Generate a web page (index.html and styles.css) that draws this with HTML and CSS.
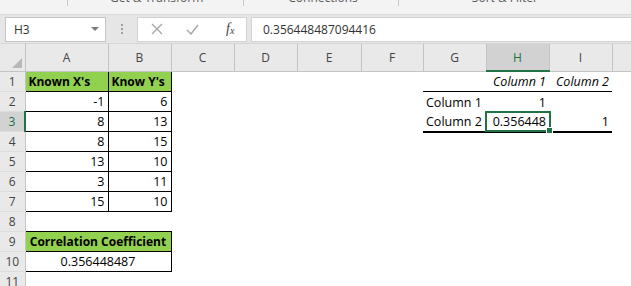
FILE: index.html
```html
<!DOCTYPE html>
<html>
  <head>
    <meta charset="UTF-8" />
    <title>Correlation - Excel</title>
    <link rel="stylesheet" href="styles.css">
  </head>

  <body>
    <div class="ribbon">
      <div class="ribbon-labels">
        <span class="sep s1"></span>
        <span class="grp g1">Get &amp; Transform</span>
        <span class="sep s2"></span>
        <span class="grp g2">Connections</span>
        <span class="sep s3"></span>
        <span class="grp g3">Sort &amp; Filter</span>
      </div>
    </div>

    <div class="fbar">
      <div class="namebox">
        <span>H3</span>
        <span class="caret"></span>
      </div>
      <div class="grip"><i></i><i></i><i></i></div>
      <div class="fbtns">
        <svg width="12" height="12" viewBox="0 0 12 12">
          <path d="M1,1 L11,11 M11,1 L1,11" stroke="#a6a6a6" stroke-width="1.3" fill="none" />
        </svg>
        <svg width="13" height="11" viewBox="0 0 13 11">
          <path d="M1,6 L5,10 L12,1" stroke="#a6a6a6" stroke-width="1.4" fill="none" />
        </svg>
        <span class="fx">f<sub>x</sub></span>
      </div>
      <div class="formula">0.356448487094416</div>
    </div>

    <table class="sheet">
      <colgroup>
        <col style="width: 25px" />
        <col style="width: 83px" />
        <col style="width: 63px" />
        <col style="width: 63px" />
        <col style="width: 63px" />
        <col style="width: 64px" />
        <col style="width: 62px" />
        <col style="width: 63px" />
        <col style="width: 63px" />
        <col style="width: 63px" />
        <col style="width: 19px" />
      </colgroup>
      <tr class="colhead">
        <th class="corner"><span class="tri"></span></th>
        <th>A</th><th>B</th><th>C</th><th>D</th><th>E</th><th>F</th><th>G</th>
        <th class="active">H</th><th>I</th><th></th>
      </tr>
      <tr>
        <th>1</th>
        <td class="box head">Known X's</td>
        <td class="box head">Know Y's</td>
        <td></td><td></td><td></td><td></td>
        <td class="rule"></td>
        <td class="rule num it">Column 1</td>
        <td class="rule num it">Column 2</td>
        <td></td>
      </tr>
      <tr>
        <th>2</th>
        <td class="box num">-1</td><td class="box num">6</td>
        <td></td><td></td><td></td><td></td>
        <td>Column 1</td><td class="num">1</td><td></td><td></td>
      </tr>
      <tr>
        <th class="active">3</th>
        <td class="box num">8</td><td class="box num">13</td>
        <td></td><td></td><td></td><td></td>
        <td class="thick">Column 2</td>
        <td class="thick num cur">0.356448<span class="sel"><span class="handle"></span></span></td>
        <td class="thick num">1</td><td></td>
      </tr>
      <tr>
        <th>4</th>
        <td class="box num">8</td><td class="box num">15</td>
        <td></td><td></td><td></td><td></td><td></td><td></td><td></td><td></td>
      </tr>
      <tr>
        <th>5</th>
        <td class="box num">13</td><td class="box num">10</td>
        <td></td><td></td><td></td><td></td><td></td><td></td><td></td><td></td>
      </tr>
      <tr>
        <th>6</th>
        <td class="box num">3</td><td class="box num">11</td>
        <td></td><td></td><td></td><td></td><td></td><td></td><td></td><td></td>
      </tr>
      <tr>
        <th>7</th>
        <td class="box num">15</td><td class="box num">10</td>
        <td></td><td></td><td></td><td></td><td></td><td></td><td></td><td></td>
      </tr>
      <tr>
        <th>8</th>
        <td></td><td></td><td></td><td></td><td></td><td></td><td></td><td></td><td></td><td></td>
      </tr>
      <tr>
        <th>9</th>
        <td class="box head mid" colspan="2">Correlation Coefficient</td>
        <td></td><td></td><td></td><td></td><td></td><td></td><td></td><td></td>
      </tr>
      <tr>
        <th>10</th>
        <td class="box mid" colspan="2">0.356448487</td>
        <td></td><td></td><td></td><td></td><td></td><td></td><td></td><td></td>
      </tr>
      <tr>
        <th>11</th>
        <td></td><td></td><td></td><td></td><td></td><td></td><td></td><td></td><td></td><td></td>
      </tr>
    </table>
  </body>
</html>
```

FILE: styles.css
```css
html,
body {
  margin: 0;
  padding: 0;
  overflow: hidden;
  background: #ffffff;
}

/* ribbon strip, only the bottom of the group labels shows */
.ribbon {
  height: 14px;
  overflow: hidden;
  background: #f3f3f3;
  border-bottom: 1px solid #dadada;
}
.ribbon-labels {
  display: flex;
  align-items: flex-start;
  margin-top: -10px;
  font-family: "Open Sans", sans-serif;
  font-size: 12px;
  line-height: 16px;
  color: #5a5a5a;
}
.grp {
  white-space: nowrap;
}
.sep {
  width: 1px;
  height: 16px;
  background: #c8c8c8;
}
.s1 { margin-left: 67px; }
.g1 { margin-left: 42px; }
.s2 { margin-left: 40px; }
.g2 { margin-left: 44px; }
.s3 { margin-left: 40px; }
.g3 { margin-left: 73px; }

/* formula bar */
.fbar {
  display: flex;
  align-items: center;
  height: 28px;
  background: #e6e6e6;
  font-family: "Open Sans", sans-serif;
  font-size: 12px;
  color: #333333;
}
.namebox {
  display: flex;
  align-items: center;
  justify-content: space-between;
  box-sizing: border-box;
  width: 101px;
  height: 25px;
  margin-left: 5px;
  padding: 0 6px 0 8px;
  background: #ffffff;
  border: 1px solid #c6c6c6;
}
.caret {
  width: 0;
  height: 0;
  border-left: 4px solid transparent;
  border-right: 4px solid transparent;
  border-top: 4px solid #7a7a7a;
}
.grip {
  display: flex;
  flex-direction: column;
  gap: 2px;
  margin-left: 15px;
  width: 2px;
}
.grip i {
  width: 2px;
  height: 2px;
  background: #a0a0a0;
}
.fbtns {
  display: flex;
  align-items: center;
  box-sizing: border-box;
  width: 110px;
  height: 25px;
  margin-left: 14px;
  padding: 0 10px 0 13px;
  gap: 23px;
  background: #ffffff;
  border: 1px solid #d2d2d2;
}
.fx {
  margin-left: 4px;
  font-family: "Liberation Serif", serif;
  font-style: italic;
  font-size: 14px;
  color: #444444;
}
.fx sub {
  font-size: 10px;
  vertical-align: -1px;
}
.formula {
  flex: 1;
  box-sizing: border-box;
  height: 25px;
  margin-left: 4px;
  padding-left: 11px;
  line-height: 23px;
  background: #ffffff;
  border: 1px solid #d2d2d2;
  border-right: 0;
}

/* sheet grid */
.sheet {
  border-collapse: collapse;
  table-layout: fixed;
  width: 631px;
  font-family: "Open Sans", sans-serif;
  font-size: 12.5px;
  color: #000000;
}
.sheet th {
  background: #e9e9e9;
  font-weight: normal;
  font-size: 12px;
  color: #444444;
  padding: 0;
}
.colhead th {
  height: 25px;
  padding-top: 1px;
  border-left: 1px solid #c4c4c4;
  border-bottom: 1px solid #c4c4c4;
  border-top: 1px solid #d6d6d6;
}
.colhead th.corner {
  border-left: 0;
  position: relative;
}
.tri {
  position: absolute;
  right: 3px;
  bottom: 3px;
  width: 0;
  height: 0;
  border-left: 10px solid transparent;
  border-bottom: 10px solid #b8b8b8;
}
.sheet tr th:first-child {
  border-right: 1px solid #c4c4c4;
}
.sheet tr:not(.colhead) th {
  height: 19px;
  border-bottom: 1px solid #dcdcdc;
}
.colhead th.active {
  background: #d2d2d2;
  color: #217346;
  border-bottom: 2px solid #217346;
}
.sheet tr:not(.colhead) th.active {
  background: #d2d2d2;
  color: #217346;
  border-right: 2px solid #217346;
}
.sheet td {
  height: 18px;
  padding: 0 3px 1px 3px;
  vertical-align: bottom;
  line-height: 16px;
  white-space: nowrap;
  overflow: visible;
}
.box {
  border: 1px solid #000000;
}
.head {
  background: #92d050;
  font-weight: bold;
  font-size: 12px;
}
.num {
  text-align: right;
}
.mid {
  text-align: center;
}
.it {
  font-style: italic;
}
.rule {
  border-bottom: 1px solid #000000;
}
.thick {
  border-bottom: 2px solid #000000;
}
.cur {
  position: relative;
}
.sel {
  position: absolute;
  left: -1px;
  top: -1px;
  right: -2px;
  bottom: -1px;
  border: 2px solid #217346;
}
.handle {
  position: absolute;
  right: -4px;
  bottom: -4px;
  width: 5px;
  height: 5px;
  background: #217346;
  border: 1px solid #ffffff;
}
```
